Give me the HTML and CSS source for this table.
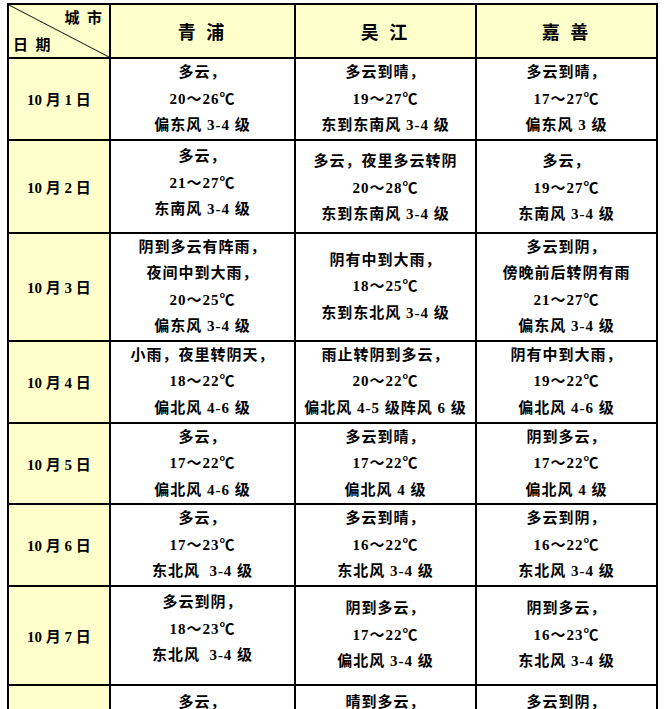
FILE: index.html
```html
<!DOCTYPE html>
<html lang="zh-CN">
<head>
<meta charset="utf-8">
<title>国庆天气预报</title>
<link rel="stylesheet" href="styles.css">
</head>
<body>
<table class="wx">
  <colgroup>
    <col class="c-date">
    <col class="c-city">
    <col class="c-city2">
    <col class="c-city2">
  </colgroup>
  <tr class="r-head">
    <td class="corner">
      <div class="corner-city">城&nbsp;&nbsp;市</div>
      <div class="corner-date">日&nbsp;&nbsp;期</div>
    </td>
    <td class="city">青 浦</td>
    <td class="city">吴 江</td>
    <td class="city">嘉 善</td>
  </tr>
  <tr class="r1">
    <td class="date">10 月 1 日</td>
    <td class="d">多云，<br>20～26℃<br>偏东风 3-4 级</td>
    <td class="d">多云到晴，<br>19～27℃<br>东到东南风 3-4 级</td>
    <td class="d">多云到晴，<br>17～27℃<br>偏东风 3 级</td>
  </tr>
  <tr class="r2">
    <td class="date">10 月 2 日</td>
    <td class="d up">多云，<br>21～27℃<br>东南风 3-4 级</td>
    <td class="d down">多云，夜里多云转阴<br>20～28℃<br>东到东南风 3-4 级</td>
    <td class="d down">多云，<br>19～27℃<br>东南风 3-4 级</td>
  </tr>
  <tr class="r3">
    <td class="date">10 月 3 日</td>
    <td class="d">阴到多云有阵雨，<br>夜间中到大雨，<br>20～25℃<br>偏东风 3-4 级</td>
    <td class="d">阴有中到大雨，<br>18～25℃<br>东到东北风 3-4 级</td>
    <td class="d">多云到阴，<br>傍晚前后转阴有雨<br>21～27℃<br>偏东风 3-4 级</td>
  </tr>
  <tr class="r4">
    <td class="date">10 月 4 日</td>
    <td class="d">小雨，夜里转阴天，<br>18～22℃<br>偏北风 4-6 级</td>
    <td class="d">雨止转阴到多云，<br>20～22℃<br>偏北风 4-5 级阵风 6 级</td>
    <td class="d">阴有中到大雨，<br>19～22℃<br>偏北风 4-6 级</td>
  </tr>
  <tr class="r5">
    <td class="date">10 月 5 日</td>
    <td class="d">多云，<br>17～22℃<br>偏北风 4-6 级</td>
    <td class="d">多云到晴，<br>17～22℃<br>偏北风 4 级</td>
    <td class="d">阴到多云，<br>17～22℃<br>偏北风 4 级</td>
  </tr>
  <tr class="r6">
    <td class="date">10 月 6 日</td>
    <td class="d">多云，<br>17～23℃<br>东北风 &nbsp;3-4 级</td>
    <td class="d">多云到晴，<br>16～22℃<br>东北风 3-4 级</td>
    <td class="d">多云到阴，<br>16～22℃<br>东北风 3-4 级</td>
  </tr>
  <tr class="r7">
    <td class="date">10 月 7 日</td>
    <td class="d lift">多云到阴，<br>18～23℃<br>东北风 &nbsp;3-4 级</td>
    <td class="d">阴到多云，<br>17～22℃<br>偏北风 3-4 级</td>
    <td class="d">阴到多云，<br>16～23℃<br>东北风 3-4 级</td>
  </tr>
  <tr class="r8">
    <td class="date"></td>
    <td class="d top">多云，</td>
    <td class="d top">晴到多云，</td>
    <td class="d top">多云到阴，</td>
  </tr>
</table>
</body>
</html>
```
FILE: styles.css
```css
html, body {
  margin: 0;
  background: #ffffff;
}
body {
  padding: 3px 0 0 7px;
  font-family: "Liberation Serif", "Noto Sans CJK SC", serif;
  font-weight: 700;
  color: #000000;
}
.wx {
  border-collapse: collapse;
  table-layout: fixed;
  width: 651px;
}
.c-date { width: 102px; }
.c-city { width: 185px; }
.c-city2 { width: 181px; }
.wx td {
  border: 2px solid #000000;
  padding: 0;
  text-align: center;
  vertical-align: middle;
}
.r-head { height: 54px; }
.r1 { height: 81px; }
.r2 { height: 93px; }
.r3 { height: 108px; }
.r4 { height: 82px; }
.r5 { height: 81px; }
.r6 { height: 81px; }
.r7 { height: 99px; }
.r8 { height: 90px; }

.corner {
  background-color: #ffffcc;
  background-image: linear-gradient(to top right, rgba(0,0,0,0) calc(50% - 1px), #222222 50%, rgba(0,0,0,0) calc(50% + 1px));
  font-size: 15px;
  line-height: 18px;
}
.corner-city {
  text-align: right;
  padding: 0 7px 9px 0;
}
.corner-date {
  text-align: left;
  padding-left: 4px;
}
.city {
  background: #ffffcc;
  font-size: 18px;
  letter-spacing: 3px;
}
.date {
  background: #ffffcc;
  font-size: 15px;
}
.d {
  background: #ffffff;
  font-size: 15px;
  line-height: 26.5px;
  letter-spacing: 1px;
}
.d.up { padding-bottom: 6px; }
.d.down { padding-top: 4px; }
.d.lift { padding-bottom: 12px; }
.d.top { vertical-align: top; padding-top: 3px; }
```
